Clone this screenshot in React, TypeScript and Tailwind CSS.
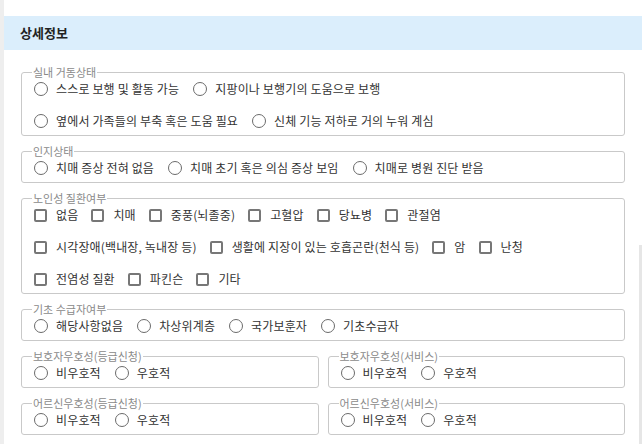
import React from "react";

function Radio({ label }: { label: string }) {
  return (
    <div className="flex items-center h-[20px] mr-[14px]">
      <span className="w-[14px] h-[14px] rounded-full border-[1.5px] border-[#6b6b6b] bg-white shrink-0" />
      <span className="ml-[8px] text-[12px] leading-[20px] tracking-[0.15px] text-[#333] whitespace-nowrap">{label}</span>
    </div>
  );
}

function Check({ label }: { label: string }) {
  return (
    <div className="flex items-center h-[20px] mr-[13px]">
      <span className="w-[13px] h-[13px] rounded-[2px] border-2 border-[#777] bg-white shrink-0" />
      <span className="ml-[9px] text-[12px] leading-[20px] tracking-[0.15px] text-[#333] whitespace-nowrap">{label}</span>
    </div>
  );
}

function Row({ children }: { children: React.ReactNode }) {
  return <div className="flex">{children}</div>;
}

function Group({ title, children }: { title: string; children: React.ReactNode }) {
  return (
    <fieldset className="border border-[#c9c9c9] rounded-[3px] pl-[10px] pr-[8px] pb-[4px] min-w-0">
      <legend className="px-[1px] text-[11px] leading-[13px] text-[#8a8a8a]">{title}</legend>
      <div className="flex flex-col gap-y-[12px] pl-[2px]">{children}</div>
    </fieldset>
  );
}

export default function App() {
  return (
    <div className="relative w-[642px] h-[444px] overflow-hidden bg-white flex font-['Noto_Sans_CJK_KR','Noto_Sans',sans-serif]">
      <div className="w-[4px] shrink-0 bg-[#eeeeee]" />
      <div className="flex-1 pt-[16px] flex flex-col">
        <div className="h-[34px] shrink-0 bg-[#dbeefc] flex items-center pl-[16px]">
          <span className="text-[13px] font-bold text-[#222]">상세정보</span>
        </div>
        <div className="mt-[16px] shrink-0 pl-[17px] pr-[17px] flex flex-col gap-[9px]">
          <Group title="실내 거동상태">
            <Row>
              <Radio label="스스로 보행 및 활동 가능" />
              <Radio label="지팡이나 보행기의 도움으로 보행" />
            </Row>
            <Row>
              <Radio label="옆에서 가족들의 부축 혹은 도움 필요" />
              <Radio label="신체 기능 저하로 거의 누워 계심" />
            </Row>
          </Group>
          <Group title="인지상태">
            <Row>
              <Radio label="치매 증상 전혀 없음" />
              <Radio label="치매 초기 혹은 의심 증상 보임" />
              <Radio label="치매로 병원 진단 받음" />
            </Row>
          </Group>
          <Group title="노인성 질환여부">
            <Row>
              <Check label="없음" />
              <Check label="치매" />
              <Check label="중풍(뇌졸중)" />
              <Check label="고혈압" />
              <Check label="당뇨병" />
              <Check label="관절염" />
            </Row>
            <Row>
              <Check label="시각장애(백내장, 녹내장 등)" />
              <Check label="생활에 지장이 있는 호흡곤란(천식 등)" />
              <Check label="암" />
              <Check label="난청" />
            </Row>
            <Row>
              <Check label="전염성 질환" />
              <Check label="파킨슨" />
              <Check label="기타" />
            </Row>
          </Group>
          <Group title="기초 수급자여부">
            <Row>
              <Radio label="해당사항없음" />
              <Radio label="차상위계층" />
              <Radio label="국가보훈자" />
              <Radio label="기초수급자" />
            </Row>
          </Group>
          <div className="grid grid-cols-2 gap-x-[9px]">
            <Group title="보호자우호성(등급신청)">
              <Row>
                <Radio label="비우호적" />
                <Radio label="우호적" />
              </Row>
            </Group>
            <Group title="보호자우호성(서비스)">
              <Row>
                <Radio label="비우호적" />
                <Radio label="우호적" />
              </Row>
            </Group>
          </div>
          <div className="grid grid-cols-2 gap-x-[9px]">
            <Group title="어르신우호성(등급신청)">
              <Row>
                <Radio label="비우호적" />
                <Radio label="우호적" />
              </Row>
            </Group>
            <Group title="어르신우호성(서비스)">
              <Row>
                <Radio label="비우호적" />
                <Radio label="우호적" />
              </Row>
            </Group>
          </div>
        </div>
      </div>
      <div className="absolute right-0 top-[245px] bottom-0 w-[3px] bg-[#e6e6e6]" />
    </div>
  );
}
